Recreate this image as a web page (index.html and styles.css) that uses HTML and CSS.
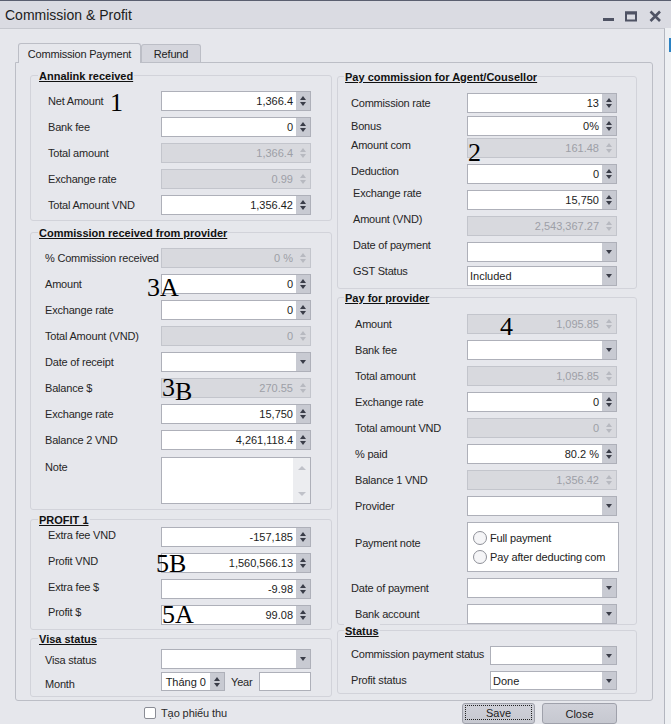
FILE: index.html
```html
<!DOCTYPE html>
<html>
<head>
<meta charset="utf-8">
<title>Commission &amp; Profit</title>
<link rel="stylesheet" href="styles.css">
</head>
<body>
<div class="screen">
  <div class="titlebar">
    <span class="title">Commission &amp; Profit</span>
    <svg class="winctl" width="68" height="28" viewBox="600 0 68 28">
      <rect x="603" y="17" width="11" height="3" fill="#4f5364"/>
      <rect x="626" y="11.5" width="10" height="8" fill="none" stroke="#4f5364" stroke-width="2"/>
      <rect x="625" y="10.5" width="12" height="3" fill="#4f5364"/>
      <path d="M650.5 10.5 L660 20 M660 10.5 L650.5 20" stroke="#4f5364" stroke-width="2.6"/>
    </svg>
  </div>
  <div class="main">
    <div class="client">
      <div class="tabs">
        <div class="tab tab-active">Commission Payment</div>
        <div class="tab tab-refund">Refund</div>
      </div>
      <div class="tabpage">
        <div class="col col-left">
          <div class="grp grp-annalink">
            <div class="gtitle">Annalink received</div>
            <div class="rows">
              <div class="row"><span class="lbl">Net Amount</span><div class="fld"><span class="v">1,366.4</span><span class="b b-spin"></span></div></div>
              <div class="row"><span class="lbl">Bank fee</span><div class="fld"><span class="v">0</span><span class="b b-spin"></span></div></div>
              <div class="row"><span class="lbl">Total amount</span><div class="fld fld-dis"><span class="v">1,366.4</span><span class="b b-spin"></span></div></div>
              <div class="row"><span class="lbl">Exchange rate</span><div class="fld fld-dis"><span class="v">0.99</span><span class="b b-spin"></span></div></div>
              <div class="row"><span class="lbl">Total Amount VND</span><div class="fld"><span class="v">1,356.42</span><span class="b b-spin"></span></div></div>
            </div>
          </div>
          <div class="grp grp-received">
            <div class="gtitle">Commission received from provider</div>
            <div class="rows">
              <div class="row"><span class="lbl">% Commission received</span><div class="fld fld-dis"><span class="v">0 %</span><span class="b b-spin"></span></div></div>
              <div class="row"><span class="lbl">Amount</span><div class="fld"><span class="v">0</span><span class="b b-spin"></span></div></div>
              <div class="row"><span class="lbl">Exchange rate</span><div class="fld"><span class="v">0</span><span class="b b-spin"></span></div></div>
              <div class="row"><span class="lbl">Total Amount (VND)</span><div class="fld fld-dis"><span class="v">0</span><span class="b b-spin"></span></div></div>
              <div class="row"><span class="lbl">Date of receipt</span><div class="fld"><span class="v"></span><span class="b b-drop"></span></div></div>
              <div class="row"><span class="lbl">Balance $</span><div class="fld fld-dis"><span class="v">270.55</span><span class="b b-spin"></span></div></div>
              <div class="row"><span class="lbl">Exchange rate</span><div class="fld"><span class="v">15,750</span><span class="b b-spin"></span></div></div>
              <div class="row"><span class="lbl">Balance 2 VND</span><div class="fld"><span class="v">4,261,118.4</span><span class="b b-spin"></span></div></div>
              <div class="row row-note"><span class="lbl lbl-note">Note</span><div class="memo"><span class="vscroll"></span></div></div>
            </div>
          </div>
          <div class="grp grp-profit">
            <div class="gtitle">PROFIT 1</div>
            <div class="rows">
              <div class="row"><span class="lbl up2">Extra fee VND</span><div class="fld"><span class="v">-157,185</span><span class="b b-spin"></span></div></div>
              <div class="row"><span class="lbl up2">Profit VND</span><div class="fld"><span class="v">1,560,566.13</span><span class="b b-spin"></span></div></div>
              <div class="row"><span class="lbl up2">Extra fee $</span><div class="fld"><span class="v">-9.98</span><span class="b b-spin"></span></div></div>
              <div class="row"><span class="lbl up3">Profit $</span><div class="fld"><span class="v">99.08</span><span class="b b-spin"></span></div></div>
            </div>
          </div>
          <div class="grp grp-visa">
            <div class="gtitle">Visa status</div>
            <div class="rows">
              <div class="row"><span class="lbl dn1">Visa status</span><div class="fld"><span class="v"></span><span class="b b-drop"></span></div></div>
              <div class="row h19"><span class="lbl dn3">Month</span><div class="fld fld-month"><span class="v">Tháng 0</span><span class="b b-spin"></span></div><span class="year-lbl">Year</span><div class="fld fld-year"><span class="v"></span></div></div>
            </div>
          </div>
        </div>
        <div class="col col-right">
          <div class="grp grp-agent">
            <div class="gtitle">Pay commission for Agent/Cousellor</div>
            <div class="rows">
              <div class="row"><span class="lbl">Commission rate</span><div class="fld"><span class="v">13</span><span class="b b-spin"></span></div></div>
              <div class="row t3"><span class="lbl">Bonus</span><div class="fld"><span class="v">0%</span><span class="b b-spin"></span></div></div>
              <div class="row t4"><span class="lbl up3">Amount com</span><div class="fld fld-dis"><span class="v">161.48</span><span class="b b-spin"></span></div></div>
              <div class="row"><span class="lbl up3">Deduction</span><div class="fld"><span class="v">0</span><span class="b b-spin"></span></div></div>
              <div class="row"><span class="lbl in2 up7">Exchange rate</span><div class="fld"><span class="v">15,750</span><span class="b b-spin"></span></div></div>
              <div class="row"><span class="lbl in2 up7">Amount (VND)</span><div class="fld fld-dis"><span class="v">2,543,367.27</span><span class="b b-spin"></span></div></div>
              <div class="row"><span class="lbl in2 up7">Date of payment</span><div class="fld"><span class="v"></span><span class="b b-drop"></span></div></div>
              <div class="row t2"><span class="lbl in2 up5">GST Status</span><div class="fld fld-text"><span class="v">Included</span><span class="b b-drop"></span></div></div>
            </div>
          </div>
          <div class="grp grp-provider">
            <div class="gtitle">Pay for provider</div>
            <div class="rows">
              <div class="row"><span class="lbl">Amount</span><div class="fld fld-dis"><span class="v">1,095.85</span><span class="b b-spin"></span></div></div>
              <div class="row"><span class="lbl">Bank fee</span><div class="fld"><span class="v"></span><span class="b b-drop"></span></div></div>
              <div class="row"><span class="lbl">Total amount</span><div class="fld fld-dis"><span class="v">1,095.85</span><span class="b b-spin"></span></div></div>
              <div class="row"><span class="lbl">Exchange rate</span><div class="fld"><span class="v">0</span><span class="b b-spin"></span></div></div>
              <div class="row"><span class="lbl">Total amount VND</span><div class="fld fld-dis"><span class="v">0</span><span class="b b-spin"></span></div></div>
              <div class="row"><span class="lbl">% paid</span><div class="fld"><span class="v">80.2 %</span><span class="b b-spin"></span></div></div>
              <div class="row"><span class="lbl">Balance 1 VND</span><div class="fld fld-dis"><span class="v">1,356.42</span><span class="b b-spin"></span></div></div>
              <div class="row"><span class="lbl">Provider</span><div class="fld"><span class="v"></span><span class="b b-drop"></span></div></div>
              <div class="row row-pay"><span class="lbl up4">Payment note</span>
                <div class="paynote">
                  <div class="radio">Full payment</div>
                  <div class="radio">Pay after deducting com</div>
                </div>
              </div>
              <div class="row"><span class="lbl out4">Date of payment</span><div class="fld"><span class="v"></span><span class="b b-drop"></span></div></div>
              <div class="row"><span class="lbl">Bank account</span><div class="fld"><span class="v"></span><span class="b b-drop"></span></div></div>
            </div>
          </div>
          <div class="grp grp-status">
            <div class="gtitle">Status</div>
            <div class="rows">
              <div class="row h19"><span class="lbl up1">Commission payment status</span><div class="fld"><span class="v"></span><span class="b b-drop"></span></div></div>
              <div class="row h19"><span class="lbl">Profit status</span><div class="fld fld-text"><span class="v">Done</span><span class="b b-drop"></span></div></div>
            </div>
          </div>
        </div>
      </div>
      <div class="footer">
        <label class="chk"><span class="chk-box"></span><span>Tạo phiếu thu</span></label>
        <div class="btn btn-save"><span class="focus">Save</span></div>
        <div class="btn btn-close">Close</div>
      </div>
    </div>
    <div class="edge"><div class="edge-blue"></div></div>
  </div>
  <div class="marks">
    <span class="mark m1">1</span>
    <span class="mark m2">2</span>
    <span class="mark m3a">3A</span>
    <span class="mark m3b">3<span class="lo">B</span></span>
    <span class="mark m4">4</span>
    <span class="mark m5b">5B</span>
    <span class="mark m5a">5A</span>
  </div>
</div>
</body>
</html>
```

FILE: styles.css
```css
* { box-sizing: border-box; }
html, body { margin: 0; padding: 0; }
body {
  width: 671px;
  height: 724px;
  overflow: hidden;
  background: #eceef2;
  font-family: "Liberation Sans", Arial, sans-serif;
  font-size: 11px;
  color: #222;
}
.screen {
  position: relative;
  width: 671px;
  height: 724px;
  display: flex;
  flex-direction: column;
}
.titlebar {
  flex: none;
  height: 28px;
  display: flex;
  align-items: center;
  padding-left: 5px;
  background: #dadbe2;
  border-top: 1px solid #5a5f70;
}
.title { font-size: 14px; color: #1c1c1c; }
.winctl { display: block; margin-left: auto; margin-right: 3px; }

.main { flex: 1; display: flex; min-height: 0; }
.client {
  width: 665px;
  background: #e6e7ec;
  border-top: 1px solid #c5c7ce;
  border-right: 1px solid #b3b6bf;
  padding: 14px 0 0 15px;
  display: flex;
  flex-direction: column;
}
.edge { flex: 1; background: #eef0f3; }
.edge-blue { width: 2px; height: 14px; margin: 10px 0 0 4px; background: #2b82c4; }

/* tabs */
.tabs {
  display: flex;
  height: 19px;
  margin-left: 3px;
  position: relative;
  z-index: 1;
}
.tab {
  height: 18px;
  margin-top: 1px;
  border: 1px solid #bcbec6;
  border-bottom: none;
  border-radius: 3px 3px 0 0;
  background: #d5d6dd;
  display: flex;
  align-items: center;
  justify-content: center;
  letter-spacing: -0.2px;
  color: #222;
}
.tab-active { width: 123px; height: 20px; margin-top: 0; background: #e6e7ec; }
.tab-refund { width: 60px; }

.tabpage {
  width: 638px;
  height: 639px;
  border: 1px solid #bcbec6;
  border-radius: 0 3px 3px 3px;
  display: flex;
  gap: 5px;
  padding: 12px 15px 0 14px;
}
.col { display: flex; flex-direction: column; }
.col-left { width: 302px; }
.col-right { width: 300px; padding-top: 1px; }

/* group boxes */
.grp {
  border: 1px solid #d2d3da;
  border-radius: 3px;
  --lp: 17px;
  --lw: 130px;
}
.gtitle {
  height: 14px;
  line-height: 14px;
  margin: -7px 0 0 7px;
  padding: 0 1px;
  width: max-content;
  background: #e6e7ec;
  font-weight: bold;
  text-decoration: underline;
  color: #111;
}
.col-right .gtitle { margin-left: 6px; }
.rows { display: flex; flex-direction: column; gap: 6px; }

.grp-annalink .rows { padding: 8px 0 5px; }
.grp-received { margin-top: 11px; --lp: 14px; }
.grp-received .rows { padding: 8px 0 5px; }
.grp-profit { margin-top: 9px; }
.grp-profit .rows { padding: 0 0 4px; }
.grp-visa { margin-top: 8px; --lp: 14px; }
.grp-visa .rows { padding: 3px 0 5px; gap: 3px; }

.grp-agent { --lp: 13px; --lw: 129px; }
.grp-agent .rows { padding: 9px 0 2px; }
.grp-provider { margin-top: 8px; --lw: 129px; }
.grp-provider .rows { padding: 9px 0 0; }
.grp-status { margin-top: 5px; --lp: 13px; --lw: 152px; }
.grp-status .rows { padding: 8px 0 3px; }
.grp-status .fld { width: 127px; }

/* rows & labels */
.row { display: flex; align-items: center; height: 20px; }
.h19 { height: 19px; }
.t2 { margin-top: -2px; }
.t3 { margin-top: -3px; }
.t4 { margin-top: -4px; }
.lbl {
  flex: none;
  width: var(--lw);
  padding-left: var(--lp);
  line-height: 13px;
  white-space: nowrap;
  letter-spacing: -0.2px;
  color: #262626;
}
.in2 { padding-left: calc(var(--lp) + 2px); }
.out4 { padding-left: calc(var(--lp) - 4px); }
.up1 { margin-bottom: 2px; }
.up2 { margin-bottom: 4px; }
.up3 { margin-bottom: 6px; }
.up4 { margin-bottom: 8px; }
.up5 { margin-bottom: 10px; }
.up7 { margin-bottom: 14px; }
.dn1 { margin-top: 2px; }
.dn3 { margin-top: 6px; }

/* fields */
.fld {
  flex: none;
  width: 150px;
  height: 100%;
  display: flex;
  border: 1px solid #aeb0b9;
  background: #fff;
  color: #1c1c1c;
}
.v {
  flex: 1;
  min-width: 0;
  line-height: 18px;
  text-align: right;
  padding-right: 3px;
  white-space: nowrap;
  overflow: hidden;
}
.fld-text .v { text-align: left; padding-left: 2px; }
.b {
  flex: none;
  width: 14px;
  background: #c8cad2;
  color: #3a3d48;
  display: flex;
  flex-direction: column;
  align-items: center;
  justify-content: center;
  gap: 2px;
}
.b-spin::before {
  content: "";
  border-left: 3px solid transparent;
  border-right: 3px solid transparent;
  border-bottom: 4px solid currentColor;
}
.b-spin::after {
  content: "";
  border-left: 3px solid transparent;
  border-right: 3px solid transparent;
  border-top: 4px solid currentColor;
}
.b-drop::before {
  content: "";
  border-left: 3.5px solid transparent;
  border-right: 3.5px solid transparent;
  border-top: 4px solid currentColor;
}
.fld-dis { background: #d8d9de; border-color: #c3c5cc; color: #9d9fa7; }
.fld-dis .b { background: transparent; color: #b7b9c0; }

.fld-month { width: 64px; }
.fld-month .v { padding-right: 4px; }
.year-lbl { margin: 0 7px 0 6px; letter-spacing: -0.2px; color: #262626; }
.fld-year { width: 52px; }

/* memo */
.row-note { height: auto; align-items: flex-start; margin-top: 1px; }
.lbl-note { padding-top: 4px; }
.memo {
  flex: none;
  width: 150px;
  height: 47px;
  border: 1px solid #aeb0b9;
  background: #fff;
  display: flex;
  justify-content: flex-end;
}
.vscroll {
  width: 17px;
  background: #ecedf0;
  color: #c0c2c9;
  display: flex;
  flex-direction: column;
  justify-content: space-between;
  align-items: center;
  padding: 8px 0 7px;
}
.vscroll::before {
  content: "";
  border-left: 4px solid transparent;
  border-right: 4px solid transparent;
  border-bottom: 4px solid currentColor;
}
.vscroll::after {
  content: "";
  border-left: 4px solid transparent;
  border-right: 4px solid transparent;
  border-top: 4px solid currentColor;
}

/* payment note */
.row-pay { height: 50px; }
.paynote {
  flex: none;
  width: 152px;
  height: 50px;
  border: 1px solid #aeb0b9;
  background: #fff;
  padding: 5px 0 0 5px;
}
.radio {
  display: flex;
  align-items: center;
  gap: 3px;
  height: 19px;
  letter-spacing: -0.15px;
  color: #222;
}
.radio::before {
  content: "";
  flex: none;
  width: 12px;
  height: 12px;
  border-radius: 50%;
  border: 1.5px solid #8e9098;
  background: #f5f5f7;
}

/* footer */
.footer {
  width: 638px;
  height: 23px;
  display: flex;
  align-items: flex-start;
  padding: 2px 36px 0 0;
}
.chk {
  display: flex;
  align-items: center;
  gap: 5px;
  margin: 4px 0 0 129px;
  letter-spacing: -0.1px;
  color: #2a2a2a;
}
.chk-box {
  width: 12px;
  height: 12px;
  border: 1px solid #8a8c95;
  border-radius: 2px;
  background: #fff;
}
.btn {
  height: 21px;
  border: 1px solid #9fa1ab;
  border-radius: 3px;
  background: linear-gradient(#d0d1d9, #c6c8d0);
  display: flex;
  align-items: center;
  justify-content: center;
  color: #222;
}
.btn-save { width: 73px; margin-left: auto; padding: 1px 2px 3px; }
.btn-save .focus {
  flex: 1;
  height: 100%;
  border: 1px dotted #222;
  display: flex;
  align-items: center;
  justify-content: center;
}
.btn-close { width: 75px; margin-left: 7px; }

/* annotation marks overlay */
.marks { position: absolute; left: 0; top: 0; width: 0; height: 0; }
.mark {
  position: absolute;
  font-family: "Liberation Serif", "Times New Roman", serif;
  font-size: 26px;
  line-height: 26px;
  color: #000;
  white-space: nowrap;
}
.m1 { left: 110px; top: 90px; }
.m2 { left: 468px; top: 140px; }
.m3a { left: 147px; top: 275px; }
.m3b { left: 162px; top: 375px; }
.m3b .lo { vertical-align: -4px; }
.m4 { left: 500px; top: 314px; }
.m5b { left: 156px; top: 551px; }
.m5a { left: 162px; top: 602px; }
```
